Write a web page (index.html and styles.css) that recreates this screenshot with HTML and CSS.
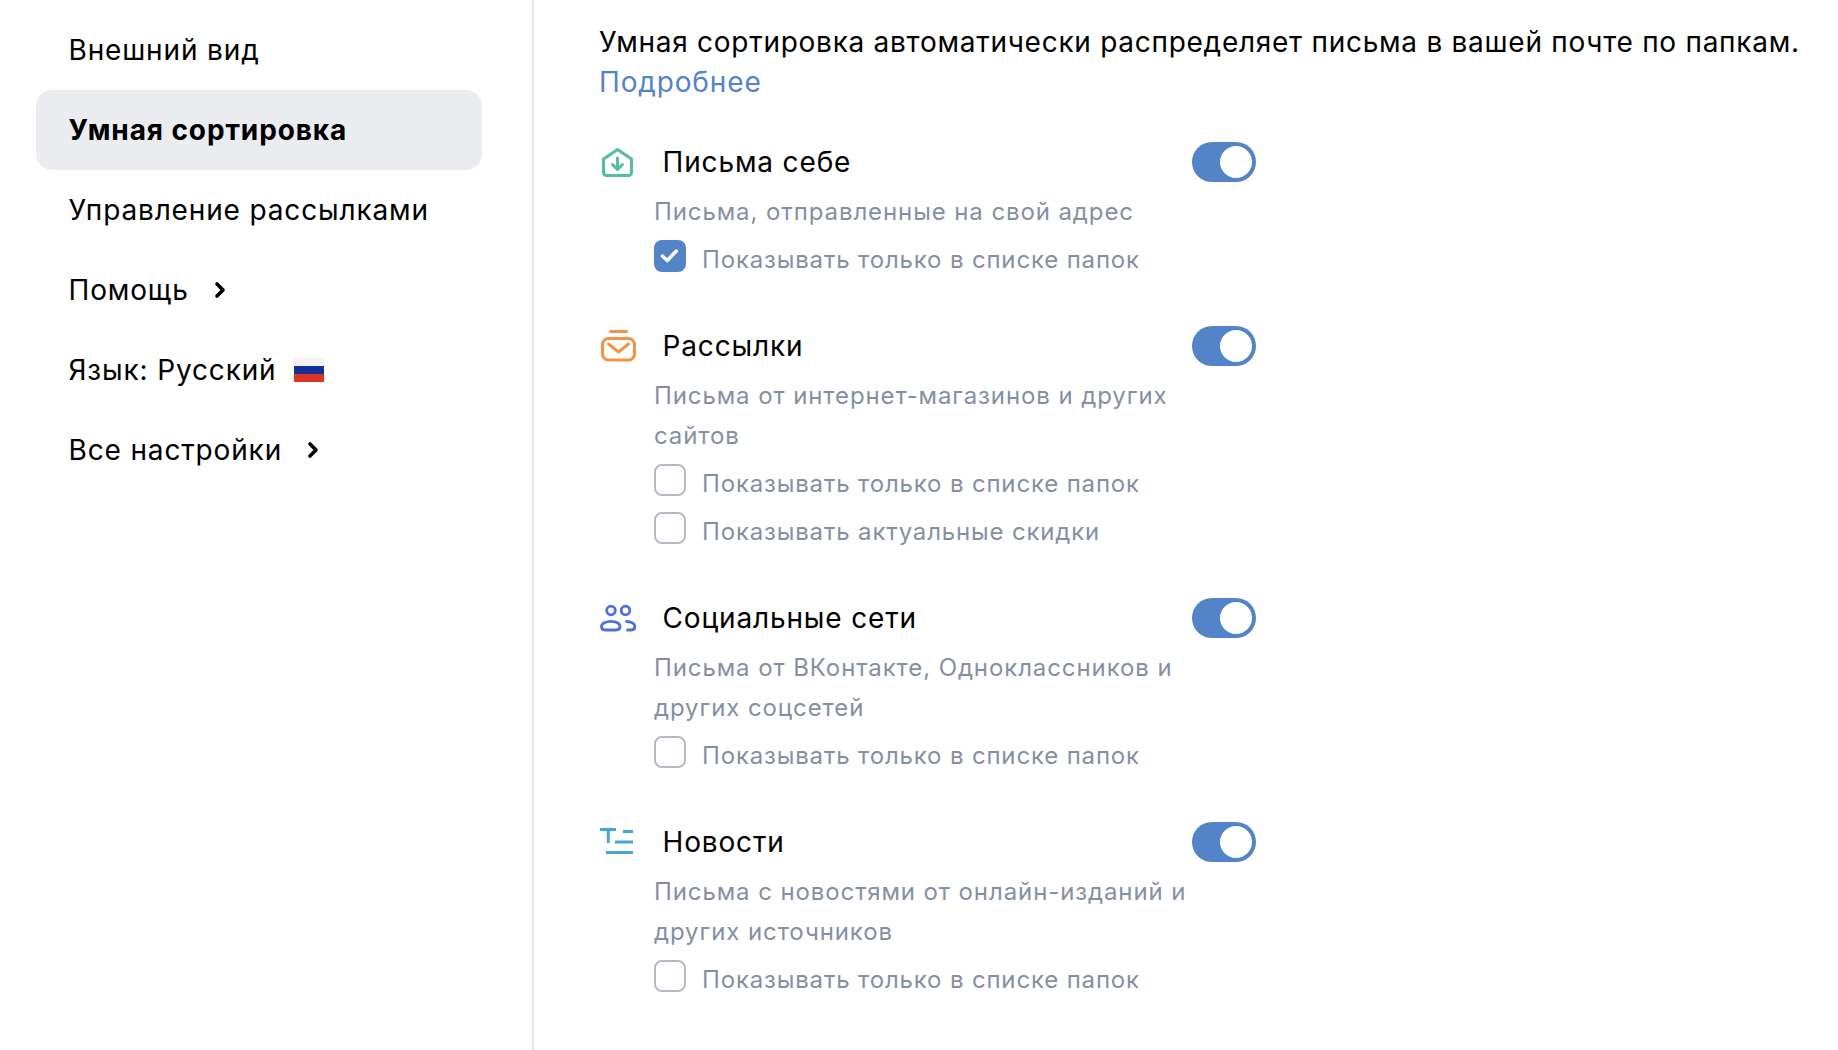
FILE: index.html
```html
<!DOCTYPE html>
<html lang="ru">
<head>
  <meta charset="UTF-8" />
  <title>Умная сортировка</title>
  <link rel="stylesheet" href="styles.css">
</head>
<body>
  <div class="sidebar">
    <div class="nav-item">Внешний вид</div>
    <div class="nav-item active">Умная сортировка</div>
    <div class="nav-item">Управление рассылками</div>
    <div class="nav-item">Помощь
      <svg class="chev" width="12" height="18" viewBox="0 0 12 18"><path d="M3 3l6 6-6 6" fill="none" stroke="#000" stroke-width="3.600" stroke-linecap="round" stroke-linejoin="round"/></svg>
    </div>
    <div class="nav-item">Язык: Русский
      <span class="flag"><i class="f-white"></i><i class="f-blue"></i><i class="f-red"></i></span>
    </div>
    <div class="nav-item">Все настройки
      <svg class="chev" width="12" height="18" viewBox="0 0 12 18"><path d="M3 3l6 6-6 6" fill="none" stroke="#000" stroke-width="3.600" stroke-linecap="round" stroke-linejoin="round"/></svg>
    </div>
  </div>

  <div class="content">
    <p class="intro">Умная сортировка автоматически распределяет письма в вашей почте по папкам.<br><a href="#">Подробнее</a></p>

    <div class="group">
      <div class="group-head">
        <svg class="ico" width="40" height="36" viewBox="0 0 40 36" fill="none" stroke="#55bd9b" stroke-width="3" stroke-linejoin="round" stroke-linecap="round"><path d="M18.500 5.500L32.500 15v13.500a3 3 0 0 1-3 3h-22a3 3 0 0 1-3-3V15z"/><path d="M18.500 14v11.500M13.500 20.500l5 5 5-5"/></svg>
        <span class="title">Письма себе</span>
        <span class="toggle"></span>
      </div>
      <div class="desc">Письма, отправленные на свой адрес</div>
      <div class="check-row"><span class="box checked"><svg width="32" height="32" viewBox="0 0 32 32"><path d="M8.500 16l4.800 4.500 9-9.500" fill="none" stroke="#fff" stroke-width="3.500" stroke-linecap="round" stroke-linejoin="round"/></svg></span>Показывать только в списке папок</div>
    </div>

    <div class="group">
      <div class="group-head">
        <svg class="ico" width="40" height="36" viewBox="0 0 40 36" fill="none" stroke="#f29443" stroke-width="3" stroke-linejoin="round" stroke-linecap="round"><rect x="3.500" y="10.500" width="32" height="21.500" rx="6"/><path d="M11.500 3.500h16M9.500 16l10 8 10-8"/></svg>
        <span class="title">Рассылки</span>
        <span class="toggle"></span>
      </div>
      <div class="desc">Письма от интернет-магазинов и других<br>сайтов</div>
      <div class="check-row"><span class="box"></span>Показывать только в списке папок</div>
      <div class="check-row"><span class="box"></span>Показывать актуальные скидки</div>
    </div>

    <div class="group">
      <div class="group-head">
        <svg class="ico" width="40" height="36" viewBox="0 0 40 36" fill="none" stroke="#4f70d9" stroke-width="2.800" stroke-linecap="round" stroke-linejoin="round"><circle cx="12" cy="10.500" r="4.300"/><circle cx="26.500" cy="10.500" r="4.300"/><path d="M6 30h11c2.500 0 4-1.500 4-3.500 0-3-4-5.200-9-5.200s-9.500 2.200-9.500 5.200c0 2 1 3.500 3.500 3.500z"/><path d="M27.500 21.500c4.500 0 8.300 2 8.300 5 0 2-1.300 3.500-3.500 3.500h-3.800"/></svg>
        <span class="title">Социальные сети</span>
        <span class="toggle"></span>
      </div>
      <div class="desc">Письма от ВКонтакте, Одноклассников и<br>других соцсетей</div>
      <div class="check-row"><span class="box"></span>Показывать только в списке папок</div>
    </div>

    <div class="group">
      <div class="group-head">
        <svg class="ico" width="40" height="36" viewBox="0 0 40 36" fill="none" stroke="#46a6d8" stroke-width="3"><path d="M1 5.500h16M9.300 5.500V19M24 7.500h10M16 18h18M7 28.500h27"/></svg>
        <span class="title">Новости</span>
        <span class="toggle"></span>
      </div>
      <div class="desc">Письма с новостями от онлайн-изданий и<br>других источников</div>
      <div class="check-row"><span class="box"></span>Показывать только в списке папок</div>
    </div>
  </div>
</body>
</html>
```

FILE: styles.css
```css
* {
  box-sizing: border-box;
}
html, body {
  height: 100%;
}
body {
  margin: 0;
  display: flex;
  height: 1050px;
  overflow: hidden;
  background: #fff;
  font-family: Inter, "Noto Sans", sans-serif;
  color: #000;
}
.sidebar {
  width: 534px;
  flex: none;
  padding: 10px 0 0 36px;
  border-right: 2px solid #e3e5ea;
}
.nav-item {
  width: 446px;
  height: 80px;
  padding-left: 32.5px;
  display: flex;
  align-items: center;
  font-size: 28px;
  letter-spacing: 0.85px;
}
.nav-item.active {
  background: #ebecf0;
  border-radius: 16px;
  font-weight: 700;
  letter-spacing: 0.9px;
}
.chev {
  margin-left: 25px;
}
.flag {
  width: 30px;
  height: 24px;
  margin-left: 17.5px;
  display: flex;
  flex-direction: column;
}
.flag i {
  flex: 1;
}
.f-white { background: #f3f3f5; }
.f-blue { background: #16309a; }
.f-red { background: #de3423; }
.content {
  padding: 22px 0 0 65px;
  flex: 1;
}
.intro {
  margin: 0 0 39px;
  font-size: 28px;
  line-height: 40px;
  letter-spacing: 0.73px;
  white-space: nowrap;
}
.intro a {
  color: #5484c8;
  text-decoration: none;
  letter-spacing: 0.85px;
}
.group {
  width: 657px;
  margin-bottom: 46px;
}
.group-head {
  display: flex;
  align-items: center;
  height: 42px;
}
.ico {
  flex: none;
}
.title {
  margin-left: 23.5px;
  font-size: 28px;
  letter-spacing: 0.85px;
  flex: 1;
}
.toggle {
  width: 64px;
  height: 40px;
  border-radius: 20px;
  background: #5484c8;
  position: relative;
}
.toggle::after {
  content: "";
  position: absolute;
  right: 4px;
  top: 4px;
  width: 32px;
  height: 32px;
  border-radius: 50%;
  background: #fff;
}
.desc {
  margin: 9px 0 0 55px;
  font-size: 24px;
  line-height: 40px;
  letter-spacing: 0.9px;
  color: #858fa3;
  white-space: nowrap;
}
.check-row {
  margin: 7px 0 0 55px;
  height: 40px;
  display: flex;
  align-items: center;
  gap: 16px;
  font-size: 24px;
  letter-spacing: 0.83px;
  color: #858fa3;
  white-space: nowrap;
}
.check-row + .check-row {
  margin-top: 8px;
}
.box {
  width: 32px;
  height: 32px;
  flex: none;
  border: 2px solid #b4bac6;
  border-radius: 8px;
  position: relative;
  top: -3px;
}
.box.checked {
  background: #5484c8;
  border: none;
}
.box svg {
  display: block;
}
```
